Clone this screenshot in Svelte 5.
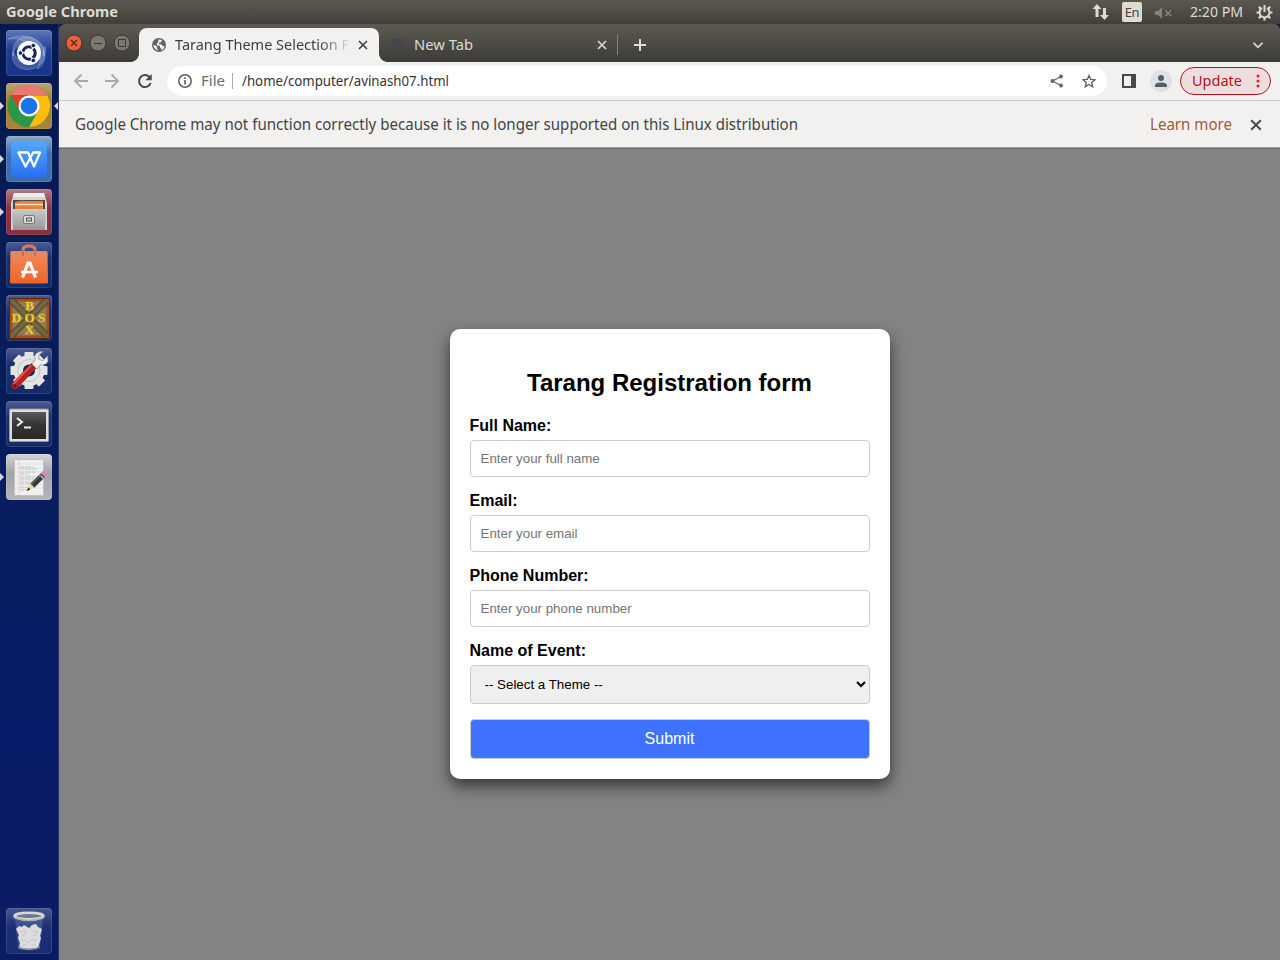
<script>
  const apps = ['dash', 'chrome', 'wps', 'files', 'software', 'dosbox', 'settings', 'terminal', 'editor'];
  const running = ['chrome', 'wps', 'files', 'editor'];
  const fields = [
    { id: 'name', label: 'Full Name:', hint: 'Enter your full name', type: 'text' },
    { id: 'email', label: 'Email:', hint: 'Enter your email', type: 'email' },
    { id: 'phone', label: 'Phone Number:', hint: 'Enter your phone number', type: 'tel' }
  ];
</script>

{#snippet label(text, width, size, color, weight = 400)}
  <svg class="label" {width} height="24" viewBox="0 0 {width} 24">
    <text x="0" y="17" textLength={width} lengthAdjust="spacingAndGlyphs" font-size={size} font-weight={weight} fill={color}>{text}</text>
  </svg>
{/snippet}

{#snippet cross(size, color, w)}
  <svg class="cross" width={size} height={size} viewBox="0 0 10 10"><path d="M1 1l8 8M9 1L1 9" stroke={color} stroke-width={w} fill="none" /></svg>
{/snippet}

{#snippet appIcon(app)}
  <svg width="46" height="46" viewBox="0 0 46 46">
    {#if app === 'dash'}
      <g fill="#d5def5" fill-opacity=".2" stroke="#d5def5" stroke-opacity=".3" stroke-width="1">
        <path d="M7 26C5 12 16 3 28 9c8 4 11 10 10 17C35 14 24 9 16 13 10 16 7 20 7 26z" /><path d="M2 9c14-6 29-3 35 8 4 9 1 19-6 22 5-8 4-17-3-22C20 10 12 8 2 9z" /><path d="M39 16c3 15-9 26-22 23C9 37 5 30 7 22c4 9 11 13 18 12 8-2 12-8 14-18z" />
      </g>
      <circle cx="23" cy="23" r="12" fill="#fff" />
      <circle cx="23" cy="23" r="6.2" fill="none" stroke="#17245b" stroke-width="3" stroke-dasharray="11.5 1.5" stroke-dashoffset="5.8" />
      <g fill="#17245b" stroke="#fff" stroke-width=".9"><circle cx="14.4" cy="23" r="2.3" /><circle cx="27.3" cy="15.5" r="2.3" /><circle cx="27.3" cy="30.5" r="2.3" /></g>
    {:else if app === 'chrome'}
      <circle cx="23" cy="23" r="21" fill="#2da94f" />
      <path d="M4.8 12.5A21 21 0 0 1 41.2 12.5H23L14 28z" fill="#e3392e" />
      <path d="M41.2 12.5A21 21 0 0 1 23 44l9-16-9-15.5z" fill="#fdbd0b" />
      <path d="M4.8 12.5L14 28.3 23 33.5 32 28 23 44A21 21 0 0 1 4.8 12.5" fill="#299747" />
      <path d="M5 12A21 21 0 0 1 41 12z" fill="#e87973" />
      <circle cx="23" cy="23" r="10.5" fill="#fff" /><circle cx="23" cy="23" r="8.3" fill="#1a73e8" />
    {:else if app === 'wps'}
      <rect x="5" y="5" width="36" height="36" rx="5" fill="url(#wps)" />
      <path d="M12.500 16.500H22L28 30.500 34 16.500H27.200L19.500 30.500z" fill="none" stroke="#fff" stroke-width="2.300" stroke-linejoin="round" />
    {:else if app === 'files'}
      <path d="M8 4h30l3 10v27H5V14z" fill="#d5d5d3" /><path d="M8 4h30l1 4H7z" fill="#ececea" />
      <path d="M7 11h32v9H7z" fill="#4b4946" /><path d="M9 13q7-2 12-1h16v8H9z" fill="#e5813a" /><path d="M9 15.500h28" stroke="#ffe3bf" stroke-width="1.500" />
      <path d="M6 20h34l-1 21H7z" fill="url(#steel)" />
      <rect x="17.500" y="26.500" width="11" height="8" rx="1.500" fill="#ddd" stroke="#777" /><rect x="20.500" y="29" width="5" height="3" fill="#ccc" stroke="#555" />
    {:else if app === 'software'}
      <path d="M17 14V8q0-4 6-4t6 4v6" fill="none" stroke="#df7656" stroke-width="3" />
      <path d="M4.500 10h37l.5 30q0 1.500-2 1.500H6q-2 0-2-1.500z" fill="url(#bag)" /><path d="M5 9h36l.5 4h-37z" fill="#e08766" />
      <path d="M17 14V8M29 14V8" stroke="#d96846" stroke-width="2" /><path d="M16.500 35.500L22 21h2l5.500 14.500" stroke="#fff" stroke-width="3.200" fill="none" /><path d="M15 30h17" stroke="#fff" stroke-width="2.500" />
    {:else if app === 'dosbox'}
      <rect x="3" y="3" width="41" height="41" fill="#a04e1c" /><rect x="6.5" y="6.5" width="34" height="34" fill="#8f7d50" />
      <path d="M6 6l34 34M40 6L6 40" stroke="#534c36" stroke-width="7" /><path d="M6 6l34 34M40 6L6 40" stroke="#736746" stroke-width="4" />
      <rect x="3.500" y="3.500" width="40" height="40" fill="none" stroke="#582a11" />
      <g class="dos" font-size="13" fill="#f5d32d" stroke="#e0b428" stroke-width=".4"><text x="23.500" y="15">B</text><text x="10.500" y="26.500">D</text><text x="23.500" y="26.500">O</text><text x="35.500" y="26.500">S</text><text x="23.500" y="39">X</text></g>
    {:else if app === 'settings'}
      <g fill="#e3e3e1">
        {#each [0, 45, 90, 135] as turn}<rect x="18.500" y="4" width="9" height="37" rx="1" transform="rotate({turn} 23 22.5)" />{/each}
        <circle cx="23" cy="22.500" r="15.500" />
      </g>
      <circle cx="23" cy="22.500" r="11" fill="none" stroke="#bfc0c0" /><circle cx="23" cy="22.500" r="6" fill="#0d2765" />
      <path d="M9 37.500L27 18.500" stroke="#b7211e" stroke-width="7" stroke-linecap="round" /><path d="M7.500 36L25 17.500" stroke="#ec5c50" stroke-width="1.600" />
      <circle cx="9" cy="38" r="1.700" fill="#641512" />
      <path d="M26 16l5 5 3-4q7 0 8-4l-.5-5-5 5-4-2 .5-4 4-3.500q-7 0-8.500 5l1 3z" fill="#eee" stroke="#999" stroke-width=".8" />
    {:else if app === 'terminal'}
      <rect x="3.500" y="8" width="39" height="32.500" rx="1" fill="#dededc" stroke="#999" /><rect x="6" y="11" width="34" height="27" fill="url(#term)" />
      <path d="M11 17l5 4-5 4M18 26.500h7" fill="none" stroke="#eee" stroke-width="2" />
    {:else if app === 'editor'}
      <path d="M8.500 5.500h29v36h-29z" fill="#f0f0ef" stroke="#c2c2c2" /><path d="M13 6v35" stroke="#f3b8b8" stroke-width=".7" />
      <path d="M9 10h28M9 14h28M9 18h28M9 22h28M9 26h28M9 30h28M9 34h28" stroke="#c9d7e5" stroke-width=".5" />
      <path d="M14 13h13M14 15h17M14 18h15M14 20h9M14 23h16M14 25h14M14 28h12M14 30h11M14 33h9M14 36h8" stroke="#b5b5b5" stroke-width=".8" stroke-dasharray="4 .7 2 .5" />
      <path d="M24 30L35 19l4 4-11 11z" fill="#393939" /><path d="M35 19l2-2.500q2-1 4.500 1.500 0 2-2.500 5z" fill="#dc86bd" /><path d="M33.500 20.500l4 4" stroke="#ccc" stroke-width="1.500" />
      <path d="M24 29l4.500 4.500-7 3z" fill="#ead889" /><path d="M22.500 33.500l2 2-4 1.500z" fill="#222" /><path d="M26 30l9-9" stroke="#777" />
    {:else if app === 'trash'}
      <path d="M9 10h28l-3 31q-11 3-22 0z" fill="#8da0cc" fill-opacity=".28" />
      <path d="M10 21l3-3 3 1 2-2 5 3 3-3 4-1 2 3 4 2-2 7 1 2-3 10q-9 3-19 0l1-5-2-5 1-3z" fill="#dcdddc" />
      <path d="M13 23l3 1 3-2 1 4-4 2M25 22l3 2 4-1-2 4-4 1M15 33l5-1 2 3 4-4 5 2M16 38l4-2M26 38l3-2" fill="none" stroke="#c1c3c3" stroke-width=".9" />
      <path d="M12 39q11 4 22 0" fill="none" stroke="#8e8f8c" />
      <ellipse cx="23" cy="8" rx="14.500" ry="3.200" fill="#6a7898" stroke="#d9d9d4" stroke-width="2.500" /><path d="M8 9.500q15 6 30 0" fill="none" stroke="#b0b0ac" stroke-width="1.500" />
    {/if}
  </svg>
{/snippet}

<svg class="defs" width="0" height="0">
  <defs>
    <linearGradient id="wps" x1="0" y1="0" x2="0" y2="1"><stop stop-color="#55a8fa" /><stop offset="1" stop-color="#2870f5" /></linearGradient>
    <linearGradient id="steel" x1="0" y1="0" x2="0" y2="1"><stop stop-color="#cacac8" /><stop offset="1" stop-color="#969695" /></linearGradient>
    <linearGradient id="bag" x1="0" y1="0" x2="0" y2="1"><stop stop-color="#f08a5b" /><stop offset="1" stop-color="#ed6428" /></linearGradient>
    <linearGradient id="term" x1="0" y1="0" x2="0" y2="1"><stop stop-color="#5a5a5a" /><stop offset=".5" stop-color="#333" /><stop offset="1" stop-color="#292929" /></linearGradient>
  </defs>
</svg>

<div class="desktop">
  <header class="panel">
    {@render label('Google Chrome', 112, 14.5, '#dfdbd2', 700)}
    <div class="tray">
      <svg class="net" width="18" height="18" viewBox="0 0 18 18"><path d="M5 1L9.500 6H6.500v8h-3V6H.5zM12.500 17L17 12H14V5h-3v7H8z" fill="#dfdbd2" /></svg>
      <span class="lang">En</span>
      <svg class="sound" width="19" height="14" viewBox="0 0 19 14"><path d="M1 5h3l4-4v12L4 9H1z" fill="#85827a" /><path d="M11.500 4.500l5.500 5.500M17 4.500L11.500 10" stroke="#85827a" stroke-width="1.700" /></svg>
      {@render label('2:20 PM', 53, 14.5, '#dfdbd2')}
      <svg class="gear" width="17" height="17" viewBox="0 0 17 17">
        <g stroke="#dfdbd2" fill="none"><path d="M6 4.100A5 5 0 1 0 11 4.100" stroke-width="2" /><path d="M8.500 1v7" stroke-width="2" />
          <path d="M13.500 8.500h3M.5 8.500h3M8.500 13.500v3M12 12l2.200 2.200M5 12l-2.200 2.200M12 5l2.200-2.200M5 5L2.800 2.800" stroke-width="2.200" /></g>
      </svg>
    </div>
  </header>

  <div class="work">
    <nav class="launcher">
      {#each apps as app}
        <div class="tile {app}" class:running={running.includes(app)} class:active={app === 'chrome'}>{@render appIcon(app)}</div>
      {/each}
      <div class="tile trash">{@render appIcon('trash')}</div>
    </nav>

    <main class="window">
      <div class="tabs">
        <div class="controls">
          <svg width="66" height="20" viewBox="0 0 66 20">
            <circle cx="9" cy="10" r="8" fill="#e9603a" stroke="#3a332b" /><path d="M6 7l6 6M12 7l-6 6" stroke="#51281b" stroke-width="1.300" />
            <circle cx="33" cy="10" r="8" fill="#7a7870" stroke="#38362f" /><path d="M29 10.500h8" stroke="#38362f" />
            <circle cx="57" cy="10" r="8" fill="#7a7870" stroke="#38362f" /><path d="M53.500 6.500h7v7h-7z" fill="none" stroke="#38362f" />
          </svg>
        </div>
        <div class="tab current">
          <svg width="14" height="14" viewBox="0 0 14 14"><circle cx="7" cy="7" r="7" fill="#5f6368" /><path d="M6.500 1.500h1.800l1.700 1-1 1.800-2 .4v1.500l2.500.3 1.300 1.500 1.700.2q-.4 3-3.300 4.200l.2-1.700-1.400-1.200V8L5 7.300 4.700 5.500l1.500-1.300zM1.400 6.800l4 1.700-.8 1.700 1.300.8v1.500Q1.500 11 1.400 6.800z" fill="#f2f1f0" /></svg>
          <div class="title">{@render label('Tarang Theme Selection F', 174, 14.5, '#3c3e41')}</div>
          {@render cross(10, '#3c3e41', 1.6)}
        </div>
        <div class="tab other">
          <svg width="14" height="14" viewBox="0 0 14 14"><circle cx="7" cy="7" r="5" fill="none" stroke="#42454a" stroke-width="4" /><path d="M7 4.200h6M4.500 8.300L1.500 3M9.500 8.300L6.500 13.500" stroke="#514f49" stroke-width=".8" /><circle cx="7" cy="7" r="2.200" fill="#42454a" /></svg>
          <div class="title">{@render label('New Tab', 59, 14.5, '#dfdbd2')}</div>
          {@render cross(10, '#dfdbd2', 1.6)}
        </div>
        <i class="divider"></i>
        <svg class="plus" width="12" height="12" viewBox="0 0 12 12"><path d="M6 0v12M0 6h12" stroke="#dfdbd2" stroke-width="2" /></svg>
        <svg class="chevron" width="10" height="7" viewBox="0 0 10 7"><path d="M.5.8L5 5.300 9.500.8" stroke="#dfdbd2" stroke-width="1.700" fill="none" /></svg>
      </div>

      <div class="toolbar">
        <svg class="nav" width="80" height="16" viewBox="0 0 80 16">
          <path d="M15 8H2M8.500 1.500L2 8l6.500 6.500M32 8h13M38.500 1.500L45 8l-6.500 6.500" fill="none" stroke="#aaa9a7" stroke-width="1.800" />
          <path d="M76.500 4A6 6 0 1 0 77.700 10" fill="none" stroke="#484848" stroke-width="2" /><path d="M78.700.9v6.300h-6.300z" fill="#484848" />
        </svg>
        <div class="omnibox">
          <svg width="14" height="14" viewBox="0 0 14 14"><circle cx="7" cy="7" r="6.200" fill="none" stroke="#5b5d60" stroke-width="1.500" /><path d="M7 6v4.500M7 3.300v1.600" stroke="#5b5d60" stroke-width="1.600" /></svg>
          <div class="scheme">{@render label('File', 24, 14.5, '#6a6c70')}</div>
          <i class="bar"></i>
          {@render label('/home/computer/avinash07.html', 207, 14.5, '#333437')}
          <svg class="share" width="14" height="14" viewBox="0 0 14 14"><path d="M11 2.500L2.500 7 11 11.500" fill="none" stroke="#66676a" stroke-width="1.300" /><g fill="#66676a"><circle cx="11" cy="2.500" r="2" /><circle cx="2.500" cy="7" r="2" /><circle cx="11" cy="11.500" r="2" /></g></svg>
          <svg class="star" width="14" height="14" viewBox="0 0 14 14"><path d="M7 1.500l1.600 3.800 4.400.4-3.300 2.800 1 4.300L7 10.500l-3.700 2.300 1-4.300L1 5.700l4.400-.4z" fill="none" stroke="#5b5d60" stroke-width="1.300" /></svg>
        </div>
        <svg class="side" width="14" height="14" viewBox="0 0 14 14"><path d="M1 1h12v12H1z" fill="none" stroke="#484848" stroke-width="2" /><path d="M9 0h5v14H9z" fill="#484848" /></svg>
        <svg class="user" width="22" height="22" viewBox="0 0 22 22"><circle cx="11" cy="11" r="11" fill="#dee1e6" /><circle cx="11" cy="8" r="3" fill="#555d6c" /><path d="M5 17v-1.500q0-3 6-3t6 3V17z" fill="#555d6c" /></svg>
        <div class="update">
          {@render label('Update', 50, 14.5, '#b3141d')}
          <svg width="4" height="14" viewBox="0 0 4 14" fill="#d3252d"><circle cx="2" cy="2" r="1.500" /><circle cx="2" cy="7" r="1.500" /><circle cx="2" cy="12" r="1.500" /></svg>
        </div>
      </div>

      <div class="infobar">
        {@render label('Google Chrome may not function correctly because it is no longer supported on this Linux distribution', 723, 16.5, '#424447')}
        <div class="more">{@render label('Learn more', 82, 16.5, '#a6593b')}</div>
        {@render cross(12, '#484848', 1.6)}
      </div>

      <section class="page">
        <form class="card" onsubmit={(e) => e.preventDefault()}>
          <h2>Tarang Registration form</h2>
          {#each fields as field}
            <label for={field.id}>{field.label}</label>
            <input id={field.id} type={field.type} placeholder={field.hint} />
          {/each}
          <label for="event">Name of Event:</label>
          <select id="event"><option>-- Select a Theme --</option></select>
          <button type="submit">Submit</button>
        </form>
      </section>
    </main>
  </div>
</div>

<style>
  :global(body) { margin: 0; overflow: hidden; }
  * { box-sizing: border-box; }
  svg { display: block; flex: none; }
  .defs { position: absolute; }
  .label { overflow: visible; font-family: 'Noto Sans', sans-serif; }
  .desktop { width: 1280px; height: 960px; display: flex; flex-direction: column; overflow: hidden; background: #071c55; }
  .panel { height: 24px; display: flex; padding-left: 6px; background: linear-gradient(#5a584e, #403f3a); }
  .tray { margin-left: auto; display: flex; align-items: center; padding-right: 7px; }
  .lang { width: 20px; height: 20px; margin: 0 12px; border-radius: 2px; background: #dfdbd2; color: #45433d; font: 13px/21px 'Noto Sans', sans-serif; text-align: center; letter-spacing: -.3px; }
  .sound { margin-right: 17px; margin-top: 2px; }
  .gear { margin-left: 13px; }
  .work { flex: 1; display: flex; min-height: 0; }
  .launcher { width: 59px; padding: 6px; display: flex; flex-direction: column; gap: 7px; background: linear-gradient(#061950, #071c56 30%, #091c69 75%, #0b1b62); border-right: 1px solid #25336c; }
  .tile { position: relative; width: 46px; height: 46px; flex: none; border-radius: 4px; background: linear-gradient(#4d5d95, #1b316e 35%, #132b68); box-shadow: inset 0 0 0 1px #ffffff1c; }
  .dash { background: linear-gradient(#5e78bb, #1c3c92 45%, #19358a); }
  .chrome { background: linear-gradient(#bca572, #a58036 35%, #aa8339); }
  .wps { background: linear-gradient(#8ea9ca, #3c70b1 40%, #3b6fae); }
  .files { background: linear-gradient(#b57a88, #8b3548 40%, #843043); }
  .editor { background: linear-gradient(#d5d5d7, #a3a4a8 40%, #b5b5b7); }
  .trash { margin-top: auto; background: linear-gradient(#46568f, #1d3077 40%, #182b73); }
  .running::before, .active::after { content: ''; position: absolute; top: 19px; border: 4px solid transparent; }
  .running::before { left: -6px; border-left-color: #d7d8dc; border-right: 0; }
  .active::after { right: -6px; border-right-color: #d7d8dc; border-left: 0; }
  .dos { font-family: 'Liberation Serif', serif; font-weight: 700; text-anchor: middle; }
  .window { flex: 1; min-width: 0; display: flex; flex-direction: column; }
  .tabs { height: 38px; display: flex; align-items: center; padding-top: 4px; background: linear-gradient(#5c5a50, #3d3c38); border-radius: 6px 6px 0 0; }
  .controls { width: 80px; padding-left: 6px; margin-top: -4px; }
  .tab { height: 34px; display: flex; align-items: center; }
  .current { position: relative; width: 240px; padding: 0 11px 0 13px; background: #f2f1f0; border-radius: 8px 8px 0 0; }
  .current::before, .current::after { content: ''; position: absolute; bottom: 0; width: 8px; height: 8px; }
  .current::before { left: -8px; background: radial-gradient(circle at 0 0, transparent 7.500px, #f2f1f0 8px); }
  .current::after { right: -8px; background: radial-gradient(circle at 100% 0, transparent 7.500px, #f2f1f0 8px); }
  .title { margin-left: 9px; }
  .current .title { width: 174px; overflow: hidden; mask-image: linear-gradient(90deg, #000 144px, transparent 176px); margin-right: auto; }
  .other { width: 228px; padding-left: 12px; }
  .other .title { margin-right: auto; }
  .divider { width: 1px; height: 20px; margin-left: 10px; background: #858279; }
  .plus { margin-left: 16px; }
  .chevron { margin-left: auto; margin-right: 17px; }
  .toolbar { height: 39px; display: flex; align-items: center; padding: 0 9px 1px 14px; background: #f2f1f0; border-bottom: 1px solid #cbcac9; }
  .omnibox { width: 940px; height: 30px; margin-left: 14px; border-radius: 15px; background: #fff; display: flex; align-items: center; padding: 0 11px; }
  .scheme { margin-left: 9px; }
  .bar { width: 1px; height: 16px; margin: 0 9px 0 7px; background: #aaa; }
  .share { margin-left: auto; }
  .star { margin-left: 18px; }
  .side { margin-left: 15px; }
  .user { margin-left: 14px; }
  .update { width: 91px; height: 28px; margin-left: 8px; border: 1px solid #b3141d; border-radius: 14px; background: #eddedd; display: flex; align-items: center; justify-content: space-between; padding: 0 10px 0 11px; }
  .infobar { height: 47px; display: flex; align-items: center; padding: 1px 18px 0 16px; background: #f2f1f0; border-bottom: 1px solid #a5a5a5; }
  .infobar .label { margin-top: 1px; }
  .more { margin-left: auto; margin-right: 18px; }
  .page { flex: 1; display: flex; align-items: center; justify-content: center; background: #838383; box-shadow: inset 0 1px #66696d; font-family: 'Liberation Sans', Arial, sans-serif; }
  .card { width: 440px; height: 450px; padding: 20px; display: flex; flex-direction: column; border-radius: 10px; background: #fff; box-shadow: 0 7px 15px rgba(0, 0, 0, .6); }
  h2 { margin: 20px 0; font-size: 24px; line-height: 28px; text-align: center; color: #000; }
  .card label { height: 18px; line-height: 18px; margin-bottom: 5px; font-size: 16px; font-weight: 700; color: #000; }
  input, select, button { width: 100%; flex: none; border: 1px solid #ccc; border-radius: 4px; font-family: inherit; }
  input { height: 37px; padding: 10px; margin: 0 0 15px; font-size: 13.333px; background: #fff; }
  input::placeholder { color: #757575; }
  select { height: 39px; padding: 10px; margin: 0 0 15px; background: #efefef; font-size: 13.333px; color: #000; }
  button { height: 40px; padding: 0; background: #3f73ff; color: #fff; font-size: 16px; }
</style>
